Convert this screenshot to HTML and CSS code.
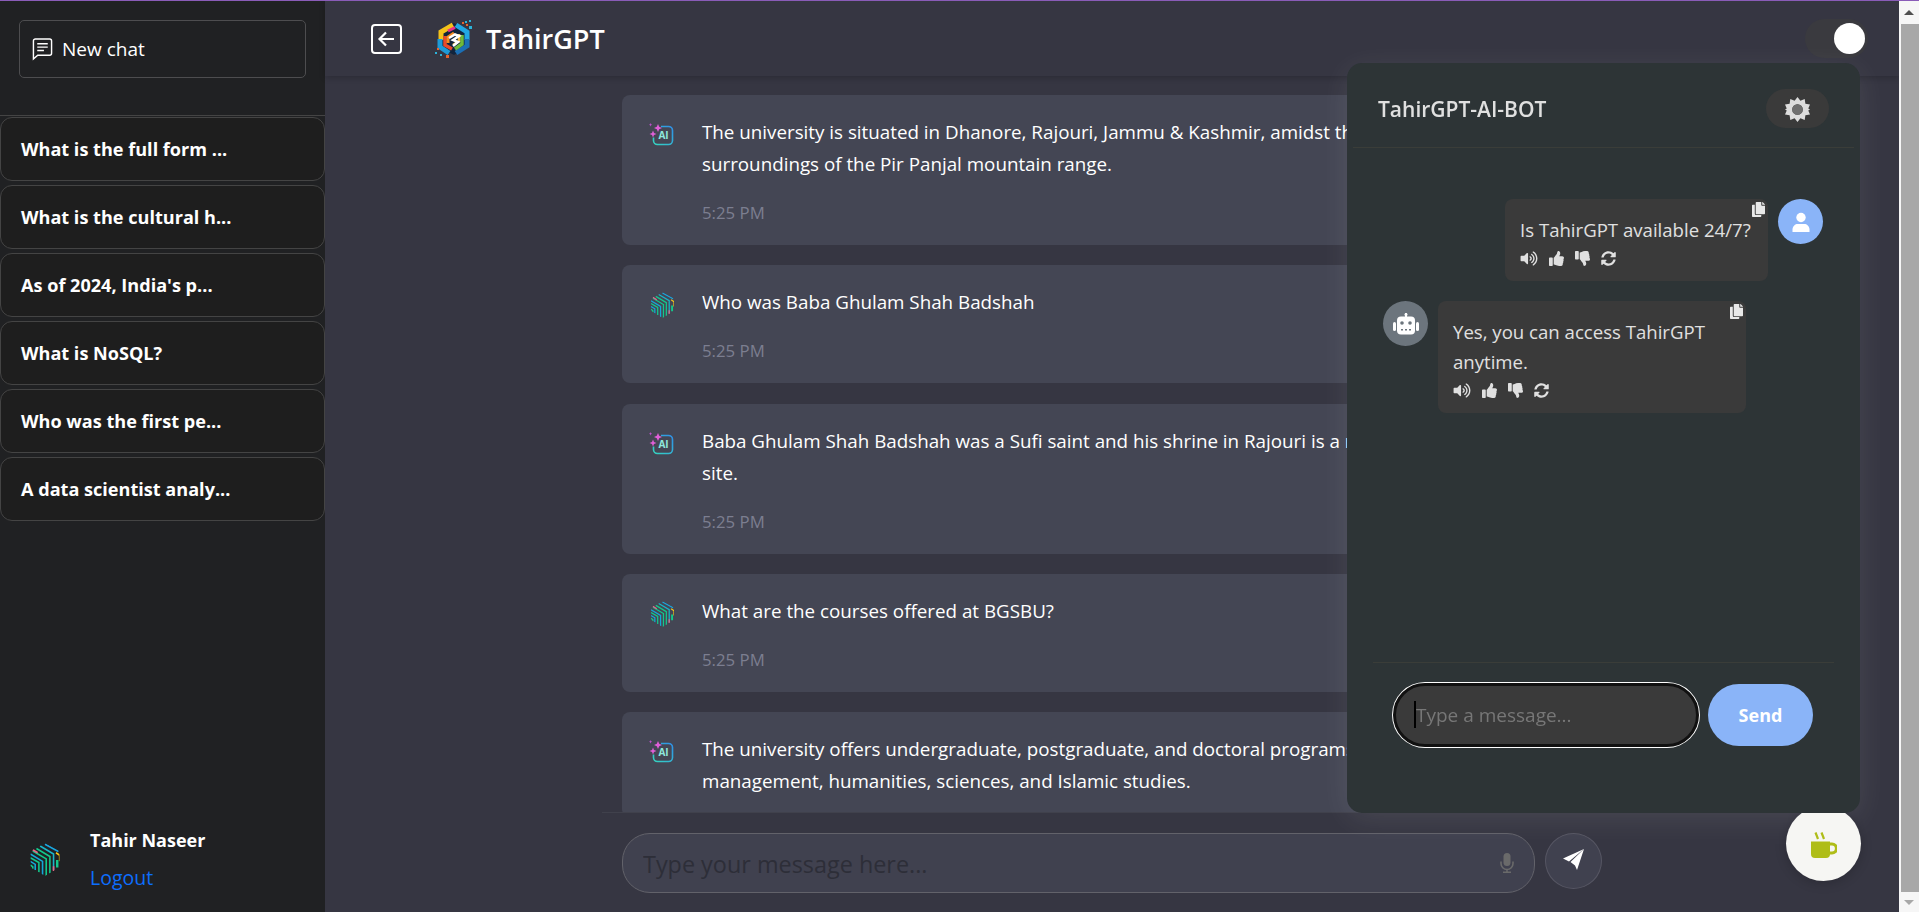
FILE: index.html
```html
<!DOCTYPE html>
<html lang="en">
  <head>
    <meta charset="UTF-8" />
    <title>TahirGPT</title>
    <link rel="stylesheet" href="styles.css">
  </head>
  <body>
    <svg class="defs" width="0" height="0">
      <defs>
        <linearGradient id="aiGrad" x1="0" y1="1" x2="1" y2="0">
          <stop offset="0" stop-color="#35d6c0" />
          <stop offset="1" stop-color="#2f8fe8" />
        </linearGradient>
        <clipPath id="cubeClip"><path d="M12 0L24 6.5V20L12 27L0 20V6.5Z" /></clipPath>
        <symbol id="ai-icon" viewBox="0 0 25 24">
          <path d="M12 3.5h7.5a4 4 0 0 1 4 4v10a4 4 0 0 1-4 4h-11a4 4 0 0 1-4-4v-3" fill="none" stroke="url(#aiGrad)" stroke-width="1.6" />
          <path d="M9 1l1.2 2.8L13 5l-2.8 1.2L9 9 7.8 6.2 5 5l2.800-1.200z" fill="#e05fd8" />
          <path d="M4 7.500l1 2.500 2.500 1-2.500 1L4 14.500 3 12l-2.500-1 2.500-1z" fill="#e05fd8" />
          <path d="M1.500 0l.5 1.200 1.200.5-1.200.5-.5 1.200L1 2.200 0 1.700 1 1.200z" fill="#c04fd0" />
          <text x="14.500" y="16" class="ai-text">AI</text>
        </symbol>
        <symbol id="cube-icon" viewBox="0 0 24 27">
          <g clip-path="url(#cubeClip)" fill="none" stroke-width="1.300">
            <path d="M12 1L23 7" stroke="#19a7e0" />
            <path d="M8 2.500L19 9V22" stroke="#19b6c9" />
            <path d="M5 4.500L16 11V25" stroke="#12c98c" />
            <path d="M2 6.500L13 13V27" stroke="#12c98c" />
            <path d="M0 9L10 15V26" stroke="#14a8d8" />
            <path d="M0 12L7 16V24" stroke="#12c98c" />
            <path d="M0 15L4 17.500V22" stroke="#14a8d8" />
            <path d="M0 18L2 19.500V21" stroke="#12c98c" />
            <path d="M21 8L24 10V15" stroke="#f5c518" />
            <path d="M2 5.500L6 8" stroke="#e8668a" />
            <path d="M22 14V20" stroke="#12c98c" stroke-width="2" />
            <path d="M19 19V23" stroke="#e8668a" />
          </g>
        </symbol>
        <symbol id="fa-volume" viewBox="0 0 576 512">
          <path d="M215.03 71.05L126.06 160H24c-13.26 0-24 10.74-24 24v144c0 13.25 10.74 24 24 24h102.06l88.97 88.95c15.03 15.03 40.97 4.47 40.97-16.97V88.020c0-21.460-25.960-31.980-40.970-16.970zm233.320-51.080c-11.170-7.330-26.180-4.240-33.510 6.950-7.340 11.170-4.220 26.180 6.950 33.510 66.270 43.490 105.820 116.600 105.820 195.580 0 78.980-39.550 152.090-105.820 195.580-11.170 7.320-14.290 22.340-6.950 33.500 7.040 10.710 21.930 14.560 33.510 6.950C528.270 439.580 576 351.330 576 256S528.270 72.430 448.350 19.970zM480 256c0-63.530-32.060-121.940-85.770-156.240-11.190-7.140-26.030-3.820-33.120 7.460s-3.780 26.210 7.410 33.360C408.270 165.970 432 209.110 432 256s-23.730 90.030-63.48 115.420c-11.190 7.140-14.500 22.070-7.410 33.360 6.510 10.360 21.120 15.140 33.120 7.460C447.940 377.940 480 319.540 480 256zm-141.770-76.870c-11.580-6.330-26.190-2.160-32.610 9.450-6.390 11.610-2.160 26.200 9.450 32.610C327.980 228.280 336 241.630 336 256c0 14.380-8.020 27.720-20.920 34.810-11.610 6.410-15.840 21-9.450 32.610 6.430 11.660 21.050 15.800 32.610 9.450 28.230-15.550 45.770-45 45.770-76.880s-17.540-61.320-45.780-76.860z" />
        </symbol>
        <symbol id="fa-up" viewBox="0 0 512 512">
          <path id="thumb" d="M104 224H24c-13.255 0-24 10.745-24 24v240c0 13.255 10.745 24 24 24h80c13.255 0 24-10.745 24-24V248c0-13.255-10.745-24-24-24zM384 81.452c0 42.416-25.970 66.208-33.277 94.548h101.723c33.397 0 59.397 27.746 59.553 58.098.084 17.938-7.546 37.249-19.439 49.197l-.11.11c9.836 23.337 8.237 56.037-9.308 79.469 8.681 25.895-.069 57.704-16.382 74.757 4.298 17.598 2.244 32.575-6.148 44.632C440.202 511.587 389.616 512 346.839 512l-2.845-.001c-48.287-.017-87.806-17.598-119.560-31.725-15.957-7.099-36.821-15.887-52.651-16.178-6.540-.12-11.783-5.457-11.783-11.998v-213.770c0-3.200 1.282-6.271 3.558-8.521 39.614-39.144 56.648-80.587 89.117-113.111 14.804-14.832 20.188-37.236 25.393-58.902C282.515 39.293 291.817 0 312 0c24 0 72 8 72 81.452z" />
        </symbol>
        <symbol id="fa-down" viewBox="0 0 512 512">
          <use href="#thumb" transform="matrix(1 0 0 -1 0 512)" />
        </symbol>
        <symbol id="fa-sync" viewBox="0 0 512 512">
          <path d="M370.720 133.280C339.458 104.008 298.888 87.962 255.848 88c-77.458.068-144.328 53.178-162.791 126.850-1.344 5.363-6.122 9.150-11.651 9.150H24.103c-7.498 0-13.194-6.807-11.807-14.176C33.933 94.924 134.813 8 256 8c66.448 0 126.791 26.136 171.315 68.685L463.030 40.970C478.149 25.851 504 36.559 504 57.941V192c0 13.255-10.745 24-24 24H345.941c-21.382 0-32.090-25.851-16.971-40.971l41.750-41.749zM32 296h134.059c21.382 0 32.090 25.851 16.971 40.971l-41.750 41.750c31.262 29.273 71.835 45.319 114.876 45.280 77.418-.07 144.315-53.144 162.787-126.849 1.344-5.363 6.122-9.150 11.651-9.150h57.304c7.498 0 13.194 6.807 11.807 14.176C478.067 417.076 377.187 504 256 504c-66.448 0-126.791-26.136-171.315-68.685L48.970 471.030C33.851 486.149 8 475.441 8 454.059V320c0-13.255 10.745-24 24-24z" />
        </symbol>
        <symbol id="fa-copy" viewBox="0 0 448 512">
          <path d="M320 448v40c0 13.255-10.745 24-24 24H24c-13.255 0-24-10.745-24-24V120c0-13.255 10.745-24 24-24h72v296c0 30.879 25.121 56 56 56h168zm0-344V0H152c-13.255 0-24 10.745-24 24v368c0 13.255 10.745 24 24 24h272c13.255 0 24-10.745 24-24V128H344c-13.200 0-24-10.800-24-24zm120.971-31.029L375.029 7.029A24 24 0 0 0 358.059 0H352v96h96v-6.059a24 24 0 0 0-7.029-16.970z" />
        </symbol>
      </defs>
    </svg>

    <aside class="sidebar">
      <button class="new-chat">
        <svg class="new-chat-icon" viewBox="0 0 22 24" fill="none" stroke="#fff" stroke-width="1.500">
          <path d="M1.500 3.500a2 2 0 0 1 2-2h15a2 2 0 0 1 2 2v13a2 2 0 0 1-2 2H6l-4.500 4z" />
          <path d="M5.500 6.500h11M5.500 10h11M5.500 13.500h7" />
        </svg>
        New chat
      </button>
      <ul class="history">
        <li>What is the full form ...</li>
        <li>What is the cultural h...</li>
        <li>As of 2024, India's p...</li>
        <li>What is NoSQL?</li>
        <li>Who was the first pe...</li>
        <li>A data scientist analy...</li>
      </ul>
      <div class="user-box">
        <svg class="user-logo"><use href="#cube-icon" /></svg>
        <div>
          <div class="user-name">Tahir Naseer</div>
          <a class="logout">Logout</a>
        </div>
      </div>
    </aside>

    <main class="main">
      <header class="topbar">
        <svg class="back-icon" viewBox="0 0 31 30" fill="none" stroke="#fff" stroke-width="2">
          <rect x="1" y="1" width="29" height="28" rx="3" />
          <path d="M23 15H9M15 8.500L8.500 15l6.500 6.500" stroke-width="2.200" />
        </svg>
        <svg class="brand-logo" viewBox="0 0 37 38">
          <path d="M19 3L33 11V26L19 35L4 27V11Z" fill="#12243c" />
          <path d="M18 5L6 12V20" fill="none" stroke="#f4c21a" stroke-width="5" />
          <path d="M5 19V27L14 33" fill="none" stroke="#1e9ad6" stroke-width="5" />
          <path d="M10 16V25L17 29" fill="none" stroke="#e94a2a" stroke-width="3.500" />
          <path d="M21 5L32 12V20" fill="none" stroke="#22a7e2" stroke-width="5" />
          <path d="M32 19V26L21 33" fill="none" stroke="#1b6fb5" stroke-width="5" />
          <path d="M27 15V24L20 29" fill="none" stroke="#6fba3a" stroke-width="3.500" />
          <path d="M13 11L20 7.500" fill="none" stroke="#e8308c" stroke-width="3" />
          <path d="M13 23L13 17L19 13" fill="none" stroke="#f58a1f" stroke-width="3" />
          <path d="M24 14L24 21L18 25" fill="none" stroke="#f5c04a" stroke-width="2.500" />
          <path d="M14 18L20 14.500L24 16L18 20L23 22L18 26" fill="none" stroke="#fff" stroke-width="2.500" />
          <g fill="#e8642c">
            <rect x="27" y="2" width="2" height="2" /><rect x="31" y="4" width="2" height="2" />
            <rect x="2" y="28" width="2" height="2" /><rect x="11" y="35" width="3" height="3" />
          </g>
          <g fill="#2bb3d9">
            <rect x="34" y="0" width="2" height="2" /><rect x="34" y="6" width="3" height="3" />
            <rect x="30" y="1" width="2" height="2" /><rect x="0" y="32" width="2" height="2" />
            <rect x="5" y="34" width="2" height="2" />
          </g>
        </svg>
        <h1 class="brand">TahirGPT</h1>
        <div class="toggle"><span class="knob"></span></div>
      </header>

      <section class="messages">
        <div class="card">
          <svg class="card-icon ai"><use href="#ai-icon" /></svg>
          <div>
            <p>The university is situated in Dhanore, Rajouri, Jammu &amp; Kashmir, amidst the scenic<br />
            surroundings of the Pir Panjal mountain range.</p>
            <time>5:25 PM</time>
          </div>
        </div>
        <div class="card">
          <svg class="card-icon cube"><use href="#cube-icon" /></svg>
          <div>
            <p>Who was Baba Ghulam Shah Badshah</p>
            <time>5:25 PM</time>
          </div>
        </div>
        <div class="card">
          <svg class="card-icon ai"><use href="#ai-icon" /></svg>
          <div>
            <p>Baba Ghulam Shah Badshah was a Sufi saint and his shrine in Rajouri is a major<br />
            site.</p>
            <time>5:25 PM</time>
          </div>
        </div>
        <div class="card">
          <svg class="card-icon cube"><use href="#cube-icon" /></svg>
          <div>
            <p>What are the courses offered at BGSBU?</p>
            <time>5:25 PM</time>
          </div>
        </div>
        <div class="card">
          <svg class="card-icon ai"><use href="#ai-icon" /></svg>
          <div>
            <p>The university offers undergraduate, postgraduate, and doctoral programs in<br />
            management, humanities, sciences, and Islamic studies.</p>
          </div>
        </div>
      </section>

      <footer class="composer">
        <div class="composer-field">
          <input class="composer-input" placeholder="Type your message here..." />
          <svg class="mic" viewBox="0 0 14 20" fill="none" stroke="#6a6a6a" stroke-width="1.600">
            <rect x="3.500" y="0" width="7" height="13" rx="3.500" fill="#6a6a6a" stroke="none" />
            <path d="M1 8.500v2a6 6 0 0 0 12 0v-2M7 16.500V19M3 19.200h8" />
          </svg>
        </div>
        <button class="composer-send">
          <svg viewBox="0 0 21 21" width="21" height="21">
            <path d="M21 0L0 9.500l6 3z" fill="#fff" />
            <path d="M21 0L7.500 13l4.500 3.500 2 4.500z" fill="#fff" />
          </svg>
        </button>
      </footer>
    </main>

    <div class="scrollbar">
      <span class="arrow up"></span>
      <span class="thumb"></span>
      <span class="arrow down"></span>
    </div>

    <button class="coffee-fab">
      <svg viewBox="0 0 26 26" width="26" height="26">
        <path d="M0 9.500h19V22a4 4 0 0 1-4 4H4a4 4 0 0 1-4-4z" fill="#afbd17" />
        <path d="M19 12h2a3 3 0 0 1 0 9h-3" fill="none" stroke="#afbd17" stroke-width="3.200" />
        <path d="M4.500 0.500L7 7M10.500 0.500L13 7" fill="none" stroke="#afbd17" stroke-width="2.200" />
      </svg>
    </button>

    <div class="bot-panel">
      <div class="bot-head">
        <h2>TahirGPT-AI-BOT</h2>
        <button class="gear-btn">
          <svg viewBox="0 0 26 26" width="25" height="25">
            <path fill="#ddd" fill-rule="evenodd" d="M13 0l3 4 4.500-1.800.7 4.800 4.800.7L24.200 12 26 13l-1.800 1 1.800 4.300-4.800.7-.7 4.800L16 22l-3 4-3-4-4.500 1.800-.7-4.800L0 18.300 1.800 14 0 13l1.800-1L0 7.700 4.800 7l.7-4.800L10 4zM13 7.500a5.500 5.500 0 1 0 0 11 5.500 5.500 0 0 0 0-11z" />
            <circle cx="13" cy="13" r="5.500" fill="#6f6f6f" />
          </svg>
        </button>
      </div>

      <div class="bot-body">
        <div class="bot-row right">
          <div class="bubble user">
            <svg class="copy"><use href="#fa-copy" /></svg>
            <p>Is TahirGPT available 24/7?</p>
            <div class="actions">
              <svg class="vol"><use href="#fa-volume" /></svg>
              <svg><use href="#fa-up" /></svg>
              <svg><use href="#fa-down" /></svg>
              <svg><use href="#fa-sync" /></svg>
            </div>
          </div>
          <span class="avatar blue">
            <svg viewBox="0 0 20 20" width="20" height="20" fill="#fff">
              <circle cx="10" cy="5.500" r="4.700" />
              <path d="M1.500 20v-2.500c0-3.500 3-5.500 5-5.500h7c2 0 5 2 5 5.500V20z" />
            </svg>
          </span>
        </div>
        <div class="bot-row">
          <span class="avatar gray">
            <svg viewBox="0 0 26 22" width="26" height="22" fill="#fff">
              <rect x="12" y="0" width="2" height="4" /><circle cx="13" cy="1.500" r="1.500" />
              <rect x="4" y="3.500" width="18" height="18" rx="4" />
              <rect x="0" y="9" width="3" height="9" rx="1.500" /><rect x="23" y="9" width="3" height="9" rx="1.500" />
              <circle cx="9" cy="10" r="1.800" fill="#6c757d" /><circle cx="17" cy="10" r="1.800" fill="#6c757d" />
              <path d="M8 16h2v1.500H8zM12 16h2v1.500h-2zM16 16h2v1.500h-2z" fill="#6c757d" />
            </svg>
          </span>
          <div class="bubble bot">
            <svg class="copy"><use href="#fa-copy" /></svg>
            <p>Yes, you can access TahirGPT<br />anytime.</p>
            <div class="actions">
              <svg class="vol"><use href="#fa-volume" /></svg>
              <svg><use href="#fa-up" /></svg>
              <svg><use href="#fa-down" /></svg>
              <svg><use href="#fa-sync" /></svg>
            </div>
          </div>
        </div>
      </div>

      <div class="bot-foot">
        <div class="bot-field">
          <span class="caret"></span>
          <input class="bot-input" placeholder="Type a message..." />
        </div>
        <button class="bot-send">Send</button>
      </div>
    </div>
  </body>
</html>
```

FILE: styles.css
```css
* {
  box-sizing: border-box;
}

body {
  margin: 0;
  height: 912px;
  overflow: hidden;
  display: flex;
  background: #363642;
  border-top: 1px solid #8a5cb8;
  font-family: "Open Sans", "Noto Sans", sans-serif;
  color: #fff;
}

button {
  font-family: inherit;
}

.defs {
  position: absolute;
}

/* sidebar */
.sidebar {
  width: 325px;
  flex-shrink: 0;
  display: flex;
  flex-direction: column;
  background: #202123;
}

.new-chat {
  margin: 19px 19px 0;
  width: 287px;
  height: 58px;
  padding: 0 0 1px 12px;
  display: flex;
  align-items: center;
  gap: 9px;
  background: transparent;
  border: 1px solid #4d4d4f;
  border-radius: 5px;
  color: #fff;
  font-size: 19px;
}

.new-chat-icon {
  width: 21px;
  height: 24px;
}

.history {
  list-style: none;
  margin: 37px 0 0;
  padding: 1px 0 0;
  border-top: 1px solid #444;
}

.history li {
  height: 64px;
  margin-bottom: 4px;
  padding-left: 20px;
  display: flex;
  align-items: center;
  background: #1e1e1e;
  border: 1px solid #444;
  border-radius: 12px;
  font-size: 18.100px;
  font-weight: 700;
}

.user-box {
  margin-top: auto;
  height: 93px;
  padding: 0 0 13px 30px;
  display: flex;
  align-items: center;
  gap: 30px;
}

.user-logo {
  width: 30px;
  height: 33px;
}

.user-name {
  font-size: 18px;
  font-weight: 700;
  line-height: 24px;
  margin-bottom: 14px;
}

.logout {
  display: block;
  color: #0d6efd;
  font-size: 19.500px;
  line-height: 24px;
}

/* main column */
.main {
  flex: 1;
  min-width: 0;
  display: flex;
  flex-direction: column;
}

.topbar {
  height: 75px;
  flex-shrink: 0;
  padding: 0 31px 0 46px;
  display: flex;
  align-items: center;
  box-shadow: 0 2px 6px rgba(0, 0, 0, 0.2);
  position: relative;
}

.back-icon {
  width: 31px;
  height: 30px;
}

.brand-logo {
  width: 37px;
  height: 38px;
  margin-left: 33px;
}

.brand {
  margin: 0 0 0 14px;
  font-size: 27px;
  font-weight: 600;
}

.toggle {
  width: 63px;
  height: 39px;
  margin-left: auto;
  padding: 4px 3px;
  display: flex;
  justify-content: flex-end;
  background: #3a3a3f;
  border-radius: 20px;
}

.knob {
  width: 31px;
  height: 31px;
  background: #fff;
  border-radius: 50%;
}

.messages {
  flex: 1;
  min-height: 0;
  overflow: hidden;
  width: 980px;
  margin: 0 auto;
  padding-top: 19px;
}

.card {
  margin-bottom: 20.300px;
  padding: 21px 27px 20px;
  display: flex;
  background: #444654;
  border-radius: 8px;
}

.card p {
  margin: 0;
  font-size: 18.800px;
  line-height: 32px;
  white-space: nowrap;
}

.card time {
  display: block;
  margin-top: 21px;
  color: #7c7e90;
  font-size: 16.800px;
  line-height: 24px;
}

.card-icon {
  flex-shrink: 0;
  margin-right: 28px;
}

.card-icon.ai {
  width: 25px;
  height: 24px;
  margin-top: 7px;
}

.card-icon.cube {
  width: 23px;
  height: 26px;
  margin-top: 6px;
  margin-left: 2px;
  margin-right: 28px;
}

.ai-text {
  fill: #8fe8dc;
  font-family: "Open Sans", sans-serif;
  font-size: 10px;
  font-weight: 700;
  text-anchor: middle;
}

.composer {
  width: 1020px;
  height: 100px;
  flex-shrink: 0;
  margin: 0 auto;
  padding: 20px 20px 0;
  display: flex;
  align-items: flex-start;
  gap: 10px;
  border-top: 1px solid #40414c;
}

.composer-field {
  position: relative;
  flex: 1;
}

.composer-input {
  width: 100%;
  height: 60px;
  padding: 2px 50px 0 20px;
  background: #40414f;
  border: 1px solid #62626a;
  border-radius: 28px;
  font-family: inherit;
  font-size: 23.400px;
  outline: none;
}

.composer-input::placeholder {
  color: #2d2e38;
}

.mic {
  position: absolute;
  top: 20px;
  right: 21px;
  width: 14px;
  height: 20px;
}

.composer-send {
  width: 57px;
  height: 56px;
  padding: 0 0 3px;
  display: flex;
  align-items: center;
  justify-content: center;
  background: #40414f;
  border: 1px solid #565663;
  border-radius: 50%;
}

/* page scrollbar */
.scrollbar {
  width: 20px;
  flex-shrink: 0;
  margin-top: -1px;
  display: flex;
  flex-direction: column;
  background: #f6f6f6;
  position: relative;
  z-index: 3;
}

.thumb {
  flex: 1;
  margin-left: 2px;
  background: #a8a8a8;
}

.arrow {
  height: 24px;
  flex-shrink: 0;
  display: flex;
  align-items: center;
  justify-content: center;
}

.arrow::before {
  content: "";
  border-left: 5px solid transparent;
  border-right: 5px solid transparent;
}

.arrow.up::before {
  border-bottom: 5px solid #505050;
}

.arrow.down {
  height: 20px;
}

.arrow.down::before {
  border-top: 5px solid #a8a8a8;
}

/* floating coffee button, sits under the panel */
.coffee-fab {
  position: fixed;
  top: 806px;
  left: 1786px;
  width: 75px;
  height: 75px;
  padding: 2px 0 0 0;
  display: flex;
  align-items: center;
  justify-content: center;
  background: #f6f6f3;
  border: none;
  border-radius: 50%;
  box-shadow: 0 2px 12px rgba(0, 0, 0, 0.2);
}

/* chat bot panel */
.bot-panel {
  position: fixed;
  top: 63px;
  left: 1347px;
  width: 513px;
  height: 750px;
  display: flex;
  flex-direction: column;
  background: #2d3436;
  border-radius: 15px;
  box-shadow: 0 6px 30px rgba(255, 255, 255, 0.09);
  z-index: 2;
}

.bot-head {
  height: 85px;
  margin: 0 6px;
  padding: 6px 25px 0;
  display: flex;
  align-items: center;
  justify-content: space-between;
  border-bottom: 1px solid #3a3d39;
}

.bot-head h2 {
  margin: 2px 0 0;
  color: #e0e0e0;
  font-size: 21px;
  font-weight: 600;
}

.gear-btn {
  width: 63px;
  height: 39px;
  padding: 7px 0 0;
  background: #3a3a3a;
  border: none;
  border-radius: 20px;
}

.bot-body {
  flex: 1;
  padding: 51px 37px 0 36px;
}

.bot-row {
  margin-bottom: 20px;
  display: flex;
  align-items: flex-start;
  gap: 10px;
}

.bot-row.right {
  justify-content: flex-end;
}

.avatar {
  width: 45px;
  height: 45px;
  flex-shrink: 0;
  display: flex;
  align-items: center;
  justify-content: center;
  border-radius: 50%;
}

.avatar.blue {
  background: #8ab4f8;
}

.avatar.gray {
  background: #6c757d;
}

.bubble {
  position: relative;
  padding: 16px 15px 0;
  background: #3a3a3a;
  border-radius: 8px;
}

.bubble.user {
  width: 263px;
  height: 82px;
}

.bubble.bot {
  width: 308px;
  height: 112px;
}

.bubble p {
  margin: 0;
  color: #e0e0e0;
  font-size: 18.600px;
  line-height: 30px;
  white-space: nowrap;
}

.copy {
  position: absolute;
  top: 3px;
  right: 3px;
  width: 13px;
  height: 15px;
  fill: #e8e8e8;
}

.actions {
  margin-top: 6px;
  display: flex;
  gap: 11px;
}

.actions svg {
  width: 15px;
  height: 15px;
  fill: #e0e0e0;
}

.actions svg.vol {
  width: 18px;
}

.bot-foot {
  height: 151px;
  flex-shrink: 0;
  margin: 0 26px;
  padding: 20px 20px 0;
  display: flex;
  align-items: flex-start;
  gap: 9px;
  border-top: 1px solid #3a3d39;
}

.bot-field {
  position: relative;
  width: 306px;
  flex-shrink: 0;
}

.caret {
  position: absolute;
  top: 18px;
  left: 21px;
  width: 2px;
  height: 27px;
  background: #000;
}

.bot-input {
  width: 100%;
  height: 64px;
  padding: 0 20px 0 20px;
  background: #3a3a3a;
  border: 3px solid #111;
  border-radius: 32px;
  box-shadow: 0 0 0 1px #fff;
  font-family: inherit;
  font-size: 19px;
  outline: none;
}

.bot-input::placeholder {
  color: #777;
}

.bot-send {
  width: 105px;
  height: 62px;
  margin-top: 1px;
  background: #8ab4f8;
  border: none;
  border-radius: 31px;
  color: #fff;
  font-size: 18px;
  font-weight: 700;
}
```
